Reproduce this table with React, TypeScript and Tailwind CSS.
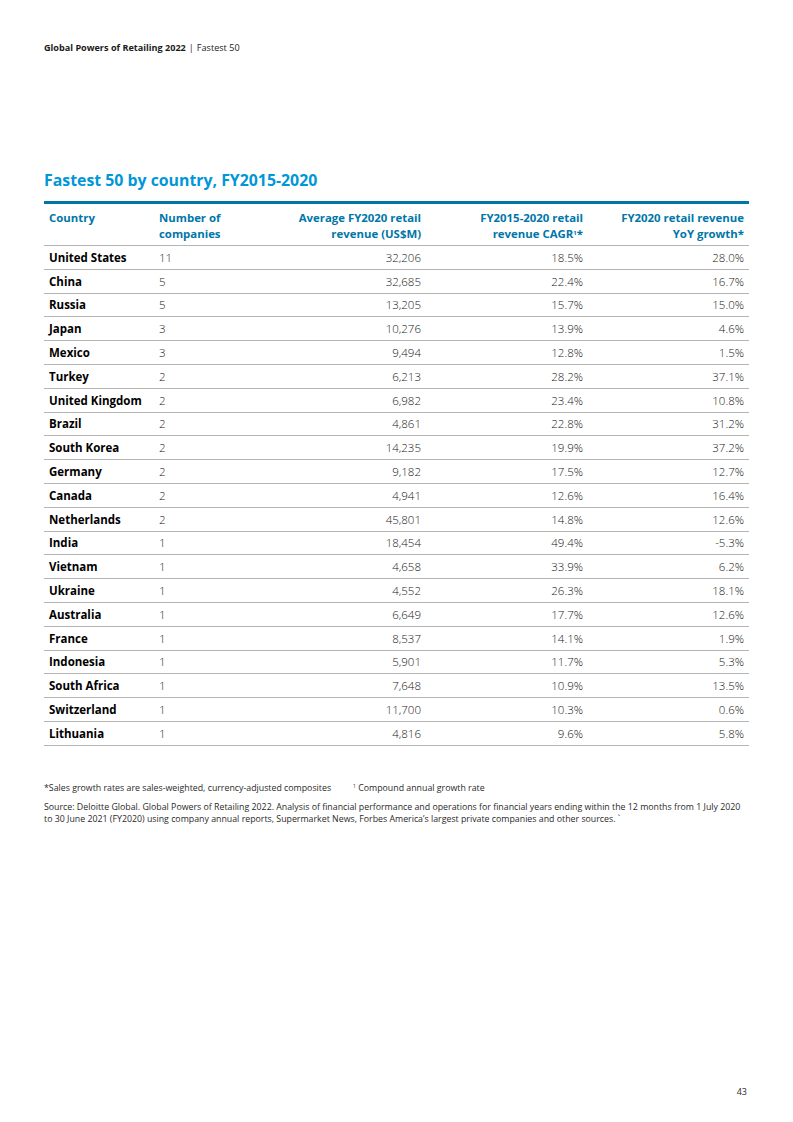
const rows: [string, string, string, string, string][] = [
  ["United States", "11", "32,206", "18.5%", "28.0%"],
  ["China", "5", "32,685", "22.4%", "16.7%"],
  ["Russia", "5", "13,205", "15.7%", "15.0%"],
  ["Japan", "3", "10,276", "13.9%", "4.6%"],
  ["Mexico", "3", "9,494", "12.8%", "1.5%"],
  ["Turkey", "2", "6,213", "28.2%", "37.1%"],
  ["United Kingdom", "2", "6,982", "23.4%", "10.8%"],
  ["Brazil", "2", "4,861", "22.8%", "31.2%"],
  ["South Korea", "2", "14,235", "19.9%", "37.2%"],
  ["Germany", "2", "9,182", "17.5%", "12.7%"],
  ["Canada", "2", "4,941", "12.6%", "16.4%"],
  ["Netherlands", "2", "45,801", "14.8%", "12.6%"],
  ["India", "1", "18,454", "49.4%", "-5.3%"],
  ["Vietnam", "1", "4,658", "33.9%", "6.2%"],
  ["Ukraine", "1", "4,552", "26.3%", "18.1%"],
  ["Australia", "1", "6,649", "17.7%", "12.6%"],
  ["France", "1", "8,537", "14.1%", "1.9%"],
  ["Indonesia", "1", "5,901", "11.7%", "5.3%"],
  ["South Africa", "1", "7,648", "10.9%", "13.5%"],
  ["Switzerland", "1", "11,700", "10.3%", "0.6%"],
  ["Lithuania", "1", "4,816", "9.6%", "5.8%"],
];

export default function App() {
  return (
    <div
      className="relative h-[1122px] w-[793px] bg-white text-[#1a1a1a]"
      style={{ fontFamily: '"Open Sans", "Liberation Sans", sans-serif' }}
    >
      <div className="px-[44px] pt-[41px] text-[9.1px] leading-[14px]">
        <span className="font-bold">Global Powers of Retailing 2022</span>
        <span className="mx-[3px]">|</span>
        <span>Fastest 50</span>
      </div>

      <div className="px-[44px] pt-[115px]">
        <h1 className="text-[15.85px] font-bold leading-[20px] text-[#0097d7]">Fastest 50 by country, FY2015-2020</h1>

        <table className="mt-[11px] w-[705px] border-collapse text-[11.5px]">
          <colgroup>
            <col className="w-[110px]" />
            <col className="w-[111px]" />
            <col className="w-[161px]" />
            <col className="w-[162px]" />
            <col className="w-[161px]" />
          </colgroup>
          <thead>
            <tr className="text-[11.4px] font-bold leading-[16px] text-[#0076a8]">
              <th className="border-t-[3px] border-b border-t-[#0076a8] border-b-[#b5b5b5] px-[5px] pt-[6px] pb-[3px] text-left align-top">Country</th>
              <th className="border-t-[3px] border-b border-t-[#0076a8] border-b-[#b5b5b5] px-[5px] pt-[6px] pb-[3px] text-left align-top">
                Number of
                <br />
                companies
              </th>
              <th className="border-t-[3px] border-b border-t-[#0076a8] border-b-[#b5b5b5] px-[5px] pt-[6px] pb-[3px] text-right align-top">
                Average FY2020 retail
                <br />
                revenue (US$M)
              </th>
              <th className="border-t-[3px] border-b border-t-[#0076a8] border-b-[#b5b5b5] px-[5px] pt-[6px] pb-[3px] text-right align-top">
                FY2015-2020 retail
                <br />
                revenue CAGR<sup className="text-[6px]">1</sup>*
              </th>
              <th className="border-t-[3px] border-b border-t-[#0076a8] border-b-[#b5b5b5] px-[5px] pt-[6px] pb-[3px] text-right align-top">
                FY2020 retail revenue
                <br />
                YoY growth*
              </th>
            </tr>
          </thead>
          <tbody>
            {rows.map((r) => (
              <tr key={r[0]} className="h-[23.8px] border-b border-[#b5b5b5] leading-[16px]">
                <td className="px-[5px] pt-[1px] font-bold text-black">{r[0]}</td>
                <td className="px-[5px] pt-[1px] font-light">{r[1]}</td>
                <td className="px-[5px] pt-[1px] text-right font-light">{r[2]}</td>
                <td className="px-[5px] pt-[1px] text-right font-light">{r[3]}</td>
                <td className="px-[5px] pt-[1px] text-right font-light">{r[4]}</td>
              </tr>
            ))}
          </tbody>
        </table>

        <div className="mt-[36px] flex text-[8.8px] leading-[12px] text-[#2a2a2a]">
          <span>*Sales growth rates are sales-weighted, currency-adjusted composites</span>
          <span className="ml-[22px]">
            <sup className="text-[5px]">1</sup> Compound annual growth rate
          </span>
        </div>
        <p className="mt-[7px] w-[705px] text-[8.8px] leading-[12px] text-[#2a2a2a]">
          Source: Deloitte Global. Global Powers of Retailing 2022. Analysis of financial performance and operations for financial years ending within the 12 months from 1 July 2020 to 30 June 2021 (FY2020) using company annual reports, Supermarket News, Forbes America’s largest private companies and other sources. `
        </p>
      </div>

      <div className="absolute right-[46px] top-[1085px] text-[9px] text-[#2a2a2a]">43</div>
    </div>
  );
}
